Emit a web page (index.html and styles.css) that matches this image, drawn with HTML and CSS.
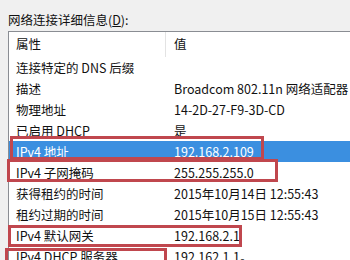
FILE: index.html
```html
<!DOCTYPE html>
<html lang="zh-CN">

<head>
  <meta charset="UTF-8" />
  <meta name="viewport" content="width=device-width, initial-scale=1.0" />
  <link rel="stylesheet" href="styles.css">
  <title>网络连接详细信息</title>
</head>

<body>
  <div class="panel">
    <p class="caption">网络连接详细信息(<u>D</u>):</p>

    <div class="list">
      <div class="header">
        <div class="cell name">属性</div>
        <div class="cell">值</div>
      </div>

      <div class="row"><div class="cell name">连接特定的 DNS 后缀</div><div class="cell"></div></div>
      <div class="row"><div class="cell name">描述</div><div class="cell">Broadcom 802.11n 网络适配器</div></div>
      <div class="row"><div class="cell name">物理地址</div><div class="cell">14-2D-27-F9-3D-CD</div></div>
      <div class="row"><div class="cell name">已启用 DHCP</div><div class="cell">是</div></div>
      <div class="row selected"><div class="cell name">IPv4 地址</div><div class="cell">192.168.2.109</div></div>
      <div class="row"><div class="cell name">IPv4 子网掩码</div><div class="cell">255.255.255.0</div></div>
      <div class="row"><div class="cell name">获得租约的时间</div><div class="cell">2015年10月14日 12:55:43</div></div>
      <div class="row"><div class="cell name">租约过期的时间</div><div class="cell">2015年10月15日 12:55:43</div></div>
      <div class="row"><div class="cell name">IPv4 默认网关</div><div class="cell">192.168.2.1</div></div>
      <div class="row"><div class="cell name">IPv4 DHCP 服务器</div><div class="cell">192.162.1.1。</div></div>

      <!-- 红框标注 -->
      <div class="mark mark-ip"></div>
      <div class="mark mark-mask"></div>
      <div class="mark mark-gateway"></div>
      <div class="mark mark-dhcp"></div>
    </div>
  </div>
</body>

</html>
```

FILE: styles.css
```css
:root {
  --mark-color: #c0474e;
  --select-color: #3b8fe0;
}

* {
  box-sizing: border-box;
}

body {
  margin: 0;
  height: 260px;
  overflow: hidden;
  background-color: #f0f0f0;
  color: #111;
  font-family: "Noto Sans CJK SC", "Noto Sans", sans-serif;
  font-size: 12.5px;
}

.panel {
  padding: 11px 0 0 8px;
}

.caption {
  margin: 0 0 2px;
  line-height: 18px;
}

/* 列表框 */
.list {
  position: relative;
  background-color: #fff;
  border-top: 1px solid #8a8d93;
  border-left: 1px solid #8a8d93;
  height: 229px;
  margin-right: -20px;
}

.header,
.row {
  display: grid;
  grid-template-columns: 157px 1fr;
  white-space: nowrap;
}

.header {
  height: 25px;
  line-height: 24px;
}

.header .name {
  border-right: 1px solid #e3e3e3;
}

.row {
  height: 21px;
  line-height: 21px;
}

.cell {
  padding-left: 8px;
  overflow: hidden;
}

.cell.name {
  padding-left: 7px;
}

.row.selected {
  background-color: var(--select-color);
  color: #fff;
}

/* 红框 */
.mark {
  position: absolute;
  border: 3px solid var(--mark-color);
  pointer-events: none;
}

.mark-ip {
  left: 1px;
  top: 104px;
  width: 254px;
  height: 24px;
}

.mark-mask {
  left: -2px;
  top: 127px;
  width: 271px;
  height: 23px;
}

.mark-gateway {
  left: -1px;
  top: 193px;
  width: 234px;
  height: 22px;
}

.mark-dhcp {
  left: -4px;
  top: 216px;
  width: 162px;
  height: 40px;
}
```
